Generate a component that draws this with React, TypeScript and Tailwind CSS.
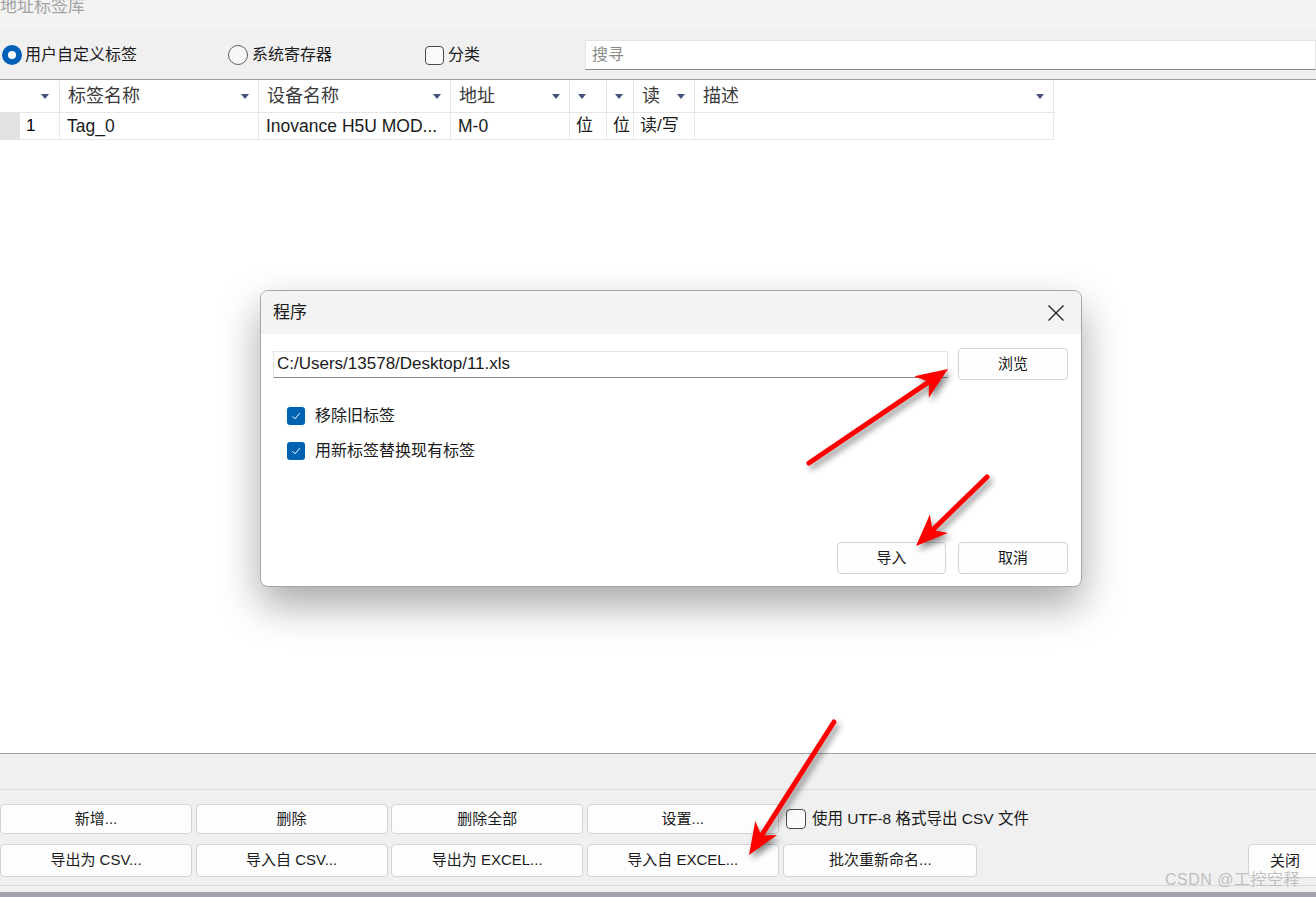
import React from 'react';

const font = "font-['Liberation_Sans','Noto_Sans_CJK_SC',sans-serif]";

const headers = [
  { w: 'w-[60px]', label: '' },
  { w: 'w-[199px]', label: '标签名称' },
  { w: 'w-[192px]', label: '设备名称' },
  { w: 'w-[119px]', label: '地址' },
  { w: 'w-[37px]', label: '' },
  { w: 'w-[27px]', label: '' },
  { w: 'w-[61px]', label: '读' },
  { w: 'w-[359px]', label: '描述' },
];

const row = [
  { w: 'w-[199px]', text: 'Tag_0', latin: true },
  { w: 'w-[192px]', text: 'Inovance H5U MOD...', latin: true },
  { w: 'w-[119px]', text: 'M-0', latin: true },
  { w: 'w-[37px]', text: '位', latin: false },
  { w: 'w-[27px]', text: '位', latin: false },
  { w: 'w-[61px]', text: '读/写', latin: false },
  { w: 'w-[359px]', text: '', latin: false },
];

const SortArrow = () => (
  <svg width="8" height="5" viewBox="0 0 8 5" className="shrink-0">
    <polygon points="0,0 8,0 4,5" fill="#43537c" />
  </svg>
);

const Check = () => (
  <span className="w-[18px] h-[18px] rounded-[3px] bg-[#0063b1] flex items-center justify-center shrink-0">
    <svg width="12" height="12" viewBox="0 0 12 12">
      <path d="M2.5 6.3 L5 8.8 L9.8 3.2" fill="none" stroke="#fff" strokeWidth="1" />
    </svg>
  </span>
);

const Btn = ({ label, w = 'w-[192px]', h = 'h-[30px]' }: { label: string; w?: string; h?: string }) => (
  <div className={`${w} ${h} bg-[#fdfdfd] border border-[#d3d3d3] rounded-[4px] flex items-center justify-center text-[15px] text-[#1b1b1b] shrink-0`}>
    {label}
  </div>
);

// arrow polygon from tail to tip, with a notched head
const arrowHead = (tx: number, ty: number, px: number, py: number, len = 32, half = 13) => {
  const dx = px - tx;
  const dy = py - ty;
  const d = Math.hypot(dx, dy);
  const ux = dx / d;
  const uy = dy / d;
  const nx = -uy;
  const ny = ux;
  const bx = px - ux * len;
  const by = py - uy * len;
  const mx = px - ux * len * 0.72;
  const my = py - uy * len * 0.72;
  return {
    pts: `${px},${py} ${bx + nx * half},${by + ny * half} ${mx},${my} ${bx - nx * half},${by - ny * half}`,
    ex: mx,
    ey: my,
  };
};

const RedArrow = ({ tx, ty, px, py }: { tx: number; ty: number; px: number; py: number }) => {
  const h = arrowHead(tx, ty, px, py);
  return (
    <g>
      <line x1={tx} y1={ty} x2={h.ex} y2={h.ey} stroke="#ff0000" strokeWidth="5" strokeLinecap="round" />
      <polygon points={h.pts} fill="#ff0000" />
    </g>
  );
};

export default function App() {
  return (
    <div className={`relative w-[1316px] h-[897px] overflow-hidden flex flex-col bg-[#f0f0f0] ${font}`}>
      {/* window title */}
      <div className="h-[28px] bg-[#f3f3f3] overflow-hidden">
        <div className="text-[17px] leading-none text-[#a3a3a3] -mt-[2px]">地址标签库</div>
      </div>

      {/* filter bar */}
      <div className="h-[52px] flex items-start border-b border-[#a0a0a0]">
        <div className="flex items-center h-[42px] pt-[12px] text-[16px] text-[#1b1b1b]">
          <span className="ml-[2px] w-[20px] h-[20px] rounded-full bg-[#005fb8] flex items-center justify-center">
            <span className="w-[8px] h-[8px] rounded-full bg-white" />
          </span>
          <span className="ml-[3px]">用户自定义标签</span>
          <span className="ml-[91px] w-[20px] h-[20px] rounded-full border border-[#5f5f5f] bg-[#f7f7f7]" />
          <span className="ml-[4px]">系统寄存器</span>
          <span className="ml-[93px] w-[19px] h-[19px] rounded-[4px] border border-[#4a4a4a] bg-[#fafafa]" />
          <span className="ml-[4px]">分类</span>
        </div>
        <div className="ml-[105px] mt-[12px] flex-1 h-[30px] bg-white border border-[#e3e3e3] border-b-[#8a8a8a] flex items-center pl-[6px] text-[16px] text-[#8a8a8a]">
          搜寻
        </div>
      </div>

      {/* table */}
      <div className="flex-1 bg-white border-b border-[#a0a0a0]">
        <div className="flex h-[33px] pt-[1px] border-b border-[#e6e6e6] w-[1055px]">
          {headers.map((c, i) => (
            <div
              key={i}
              className={`${c.w} h-full border-r border-[#e4e4e4] flex items-center ${i === 0 ? 'justify-end pr-[10px]' : 'justify-between pl-[8px] pr-[9px]'} text-[18px] text-[#3a3a3a]`}
            >
              {c.label && <span>{c.label}</span>}
              <SortArrow />
            </div>
          ))}
        </div>
        <div className="flex h-[27px]">
          <div className="w-[20px] h-full bg-[#e2e2e2]" />
          <div className="w-[40px] h-full border-r border-b border-[#e6e6e6] flex items-center pl-[6px] text-[17px] text-black">1</div>
          {row.map((c, i) => (
            <div
              key={i}
              className={`${c.w} h-full border-r border-b border-[#e6e6e6] flex items-center ${c.latin ? 'pl-[7px] text-[17.5px]' : 'pl-[6px] text-[17px]'} text-[#1a1a1a] whitespace-nowrap overflow-hidden`}
            >
              {c.text}
            </div>
          ))}
        </div>
      </div>

      {/* bottom panel */}
      <div className="h-[36px] border-b border-[#dcdcdc]" />
      <div className="h-[96px] border-b border-[#dadada] flex flex-col pt-[14px] gap-[8px]">
        <div className="flex items-center gap-[3.6px]">
          <Btn label="新增..." />
          <Btn label="删除" />
          <Btn label="删除全部" />
          <Btn label="设置..." />
          <span className="ml-[4px] w-[20px] h-[20px] rounded-[4px] border border-[#4a4a4a] bg-[#fafafa]" />
          <span className="ml-[2px] text-[15.5px] text-[#1b1b1b]">使用 UTF-8 格式导出 CSV 文件</span>
        </div>
        <div className="flex items-center gap-[3.6px]">
          <Btn label="导出为 CSV..." h="h-[33px]" />
          <Btn label="导入自 CSV..." h="h-[33px]" />
          <Btn label="导出为 EXCEL..." h="h-[33px]" />
          <Btn label="导入自 EXCEL..." h="h-[33px]" />
          <div className="ml-[1px]">
            <Btn label="批次重新命名..." w="w-[194px]" h="h-[33px]" />
          </div>
          <div className="ml-auto -mr-[6px] mt-[2px]">
            <Btn label="关闭" w="w-[74px]" h="h-[34px]" />
          </div>
        </div>
      </div>
      <div className="h-[6px]" />
      <div className="h-[5px] bg-[#a2a2ae]" />

      {/* watermark */}
      <div className="absolute left-[1165px] top-[868px] text-[16px] text-[#b9b9b9]/90 tracking-[0.5px]">CSDN @工控空释</div>

      {/* dialog */}
      <div className="absolute left-[260px] top-[290px] w-[822px] h-[297px] rounded-[8px] border border-[#a6a6a6] bg-white overflow-hidden shadow-[0_18px_40px_rgba(0,0,0,0.35)] flex flex-col">
        <div className="h-[43px] bg-[#f3f3f3] flex items-center justify-between pl-[12px] pr-[16px]">
          <span className="text-[17px] text-[#1a1a1a]">程序</span>
          <svg width="18" height="18" viewBox="0 0 18 18">
            <path d="M1.5 1.5 L16.5 16.5 M16.5 1.5 L1.5 16.5" stroke="#1f1f1f" strokeWidth="1.3" />
          </svg>
        </div>
        <div className="flex-1 flex flex-col px-[12px]">
          <div className="flex items-center mt-[14px] gap-[10px]">
            <div className="w-[675px] h-[27px] border border-[#e5e5e5] border-b-[#8a8a8a] flex items-center pl-[3px] text-[17px] text-[#1a1a1a]">
              C:/Users/13578/Desktop/11.xls
            </div>
            <Btn label="浏览" w="w-[110px]" h="h-[32px]" />
          </div>
          <div className="flex items-center gap-[10px] mt-[24px] ml-[14px] text-[16px] text-[#1a1a1a]">
            <Check />
            <span>移除旧标签</span>
          </div>
          <div className="flex items-center gap-[10px] mt-[11px] ml-[14px] text-[16px] text-[#1a1a1a]">
            <Check />
            <span>用新标签替换现有标签</span>
          </div>
          <div className="mt-auto mb-[12px] flex justify-end gap-[12px] pr-[1px]">
            <Btn label="导入" w="w-[109px]" h="h-[32px]" />
            <Btn label="取消" w="w-[110px]" h="h-[32px]" />
          </div>
        </div>
      </div>

      {/* annotation arrows */}
      <svg
        className="absolute left-0 top-0 pointer-events-none drop-shadow-[3px_4px_3px_rgba(0,0,0,0.45)]"
        width="1316"
        height="897"
        viewBox="0 0 1316 897"
      >
        <RedArrow tx={809} ty={463} px={948} py={369} />
        <RedArrow tx={987} ty={477} px={916} py={546} />
        <RedArrow tx={834} ty={722} px={749} py={855} />
      </svg>
    </div>
  );
}
